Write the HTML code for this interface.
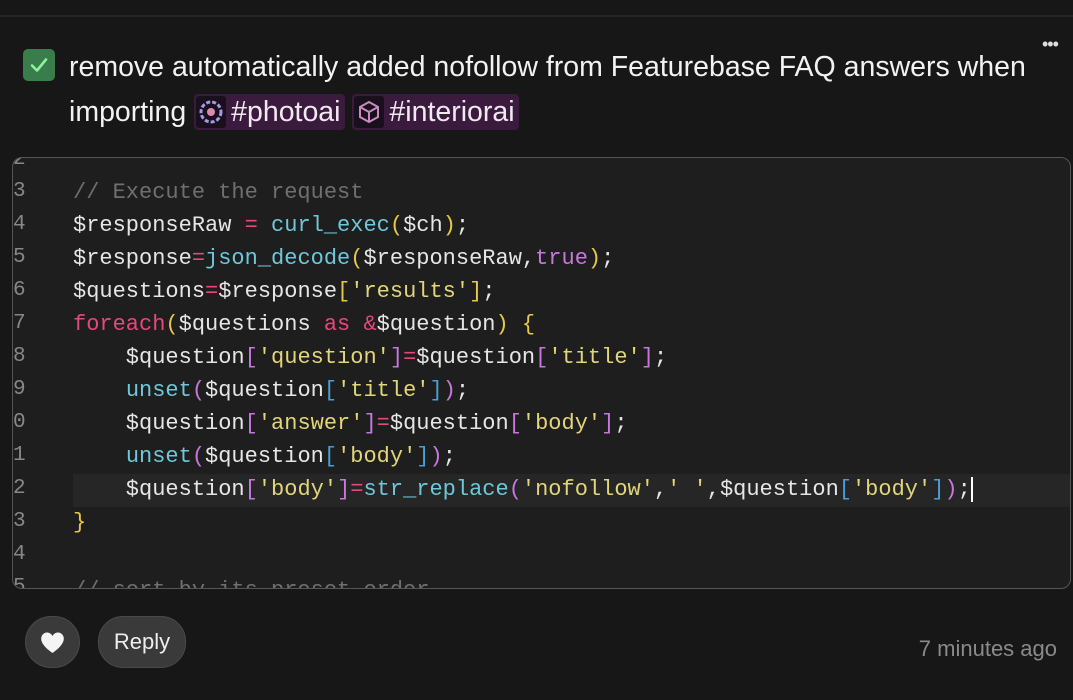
<!DOCTYPE html>
<html><head><meta charset="utf-8"><style>
body{margin:0;width:1073px;height:700px;background:#171717;overflow:hidden;position:relative;font-family:"Liberation Sans",sans-serif;color:#f0f0f0}
.topline{position:absolute;left:0;right:0;top:15px;height:2px;background:#262626}
.dots{position:absolute;left:1042px;top:34px;font-size:18px;color:#ddd;letter-spacing:-1px}
.chk{position:absolute;left:23px;top:49px;width:32px;height:32px;border-radius:5px;background:#3a7d4c}
.title{position:absolute;left:69px;top:45px;font-size:28.5px;line-height:45px;width:1000px;color:#f2f2f2}
.tag{background:#3a1b3e;border-radius:4px;padding:2px 4px 2px 2px;color:#f2e8f2}
.ti{display:inline-block;width:30px;height:32px;background:#1a0f1c;vertical-align:-7px;margin-right:5px;border-radius:3px}
.code{position:absolute;left:12px;top:157px;width:1057px;height:430px;border:1.5px solid #555;border-radius:10px;background:#1e1e1e;overflow:hidden}
.ln{position:absolute;left:0;font-family:"Liberation Mono",monospace;font-size:21px;color:#888}
.l{position:absolute;left:60px;white-space:pre;font-family:"Liberation Mono","DejaVu Sans Mono",monospace;font-size:22px;color:#e6e6e6}
.hl{position:absolute;left:60px;right:0;top:316px;height:33px;background:#262626}
.c{color:#6f6f6f}.f{color:#6ec8da}.s{color:#e3d579}.k{color:#e8467c}.p{color:#c678dd}.b{color:#4a9fd8}.y{color:#e6c84a}
.heart{position:absolute;left:25px;top:616px;width:53px;height:50px;border-radius:26px;background:#3a3a3a;border:1px solid #4a4a4a}
.reply{position:absolute;left:98px;top:616px;width:86px;height:50px;border-radius:25px;background:#3a3a3a;border:1px solid #4a4a4a;font-size:22px;line-height:50px;text-align:center;color:#eee}
.time{position:absolute;right:16px;top:636px;font-size:22px;color:#8a8a8a}
</style></head><body>
<div class="topline"></div>
<div class="dots">•••</div>
<div class="chk"><svg width="32" height="32"><path d="M9 16.5l5 5 9-11" fill="none" stroke="#8ff09e" stroke-width="2.6" stroke-linecap="round" stroke-linejoin="round"/></svg></div>
<div class="title">remove automatically added nofollow from Featurebase FAQ answers when importing <span class="tag"><span class="ti"><svg width="30" height="32"><circle cx="15" cy="16" r="10" fill="none" stroke="#a59be0" stroke-width="3" stroke-dasharray="4 2"/><circle cx="15" cy="16" r="4" fill="#d88bb0"/></svg></span>#photoai</span> <span class="tag"><span class="ti"><svg width="30" height="32"><path d="M15 6l9 5v10l-9 5-9-5V11z M15 16v10 M15 16l9-5 M15 16l-9-5" fill="none" stroke="#c88bc0" stroke-width="2"/></svg></span>#interiorai</span></div>
<div class="code">
<div class="hl"></div>
<div class="ln" style="top:-10px">2</div>
<div class="ln" style="top:22px">3</div><div class="ln" style="top:55px">4</div><div class="ln" style="top:88px">5</div><div class="ln" style="top:121px">6</div><div class="ln" style="top:154px">7</div><div class="ln" style="top:187px">8</div><div class="ln" style="top:220px">9</div><div class="ln" style="top:253px">0</div><div class="ln" style="top:286px">1</div><div class="ln" style="top:319px">2</div><div class="ln" style="top:352px">3</div><div class="ln" style="top:385px">4</div><div class="ln" style="top:418px">5</div>
<div class="l c" style="top:22px">// Execute the request</div>
<div class="l" style="top:55px">$responseRaw <span class="k">=</span> <span class="f">curl_exec</span><span class="y">(</span>$ch<span class="y">)</span>;</div>
<div class="l" style="top:88px">$response<span class="k">=</span><span class="f">json_decode</span><span class="y">(</span>$responseRaw,<span class="p">true</span><span class="y">)</span>;</div>
<div class="l" style="top:121px">$questions<span class="k">=</span>$response<span class="y">[</span><span class="s">'results'</span><span class="y">]</span>;</div>
<div class="l" style="top:154px"><span class="k">foreach</span><span class="y">(</span>$questions <span class="k">as</span> <span class="k">&amp;</span>$question<span class="y">)</span> <span class="y">{</span></div>
<div class="l" style="top:187px">    $question<span class="p">[</span><span class="s">'question'</span><span class="p">]</span><span class="k">=</span>$question<span class="p">[</span><span class="s">'title'</span><span class="p">]</span>;</div>
<div class="l" style="top:220px">    <span class="f">unset</span><span class="p">(</span>$question<span class="b">[</span><span class="s">'title'</span><span class="b">]</span><span class="p">)</span>;</div>
<div class="l" style="top:253px">    $question<span class="p">[</span><span class="s">'answer'</span><span class="p">]</span><span class="k">=</span>$question<span class="p">[</span><span class="s">'body'</span><span class="p">]</span>;</div>
<div class="l" style="top:286px">    <span class="f">unset</span><span class="p">(</span>$question<span class="b">[</span><span class="s">'body'</span><span class="b">]</span><span class="p">)</span>;</div>
<div class="l" style="top:319px">    $question<span class="p">[</span><span class="s">'body'</span><span class="p">]</span><span class="k">=</span><span class="f">str_replace</span><span class="p">(</span><span class="s">'nofollow'</span>,<span class="s">' '</span>,$question<span class="b">[</span><span class="s">'body'</span><span class="b">]</span><span class="p">)</span>;<span style="border-left:2px solid #fff"></span></div>
<div class="l y" style="top:352px">}</div>
<div class="l c" style="top:420px">// sort by its preset order</div>
</div>
<div class="heart"><svg width="53" height="50"><path d="M26.5 36C15 28 14 22 16 18.5c2.5-4 8-4 10.5 0.5 2.5-4.5 8-4.5 10.5-0.5 2 3.5 1 9.5-10.5 17.5z" fill="#f4f4f4"/></svg></div>
<div class="reply">Reply</div>
<div class="time">7 minutes ago</div>
</body></html>
